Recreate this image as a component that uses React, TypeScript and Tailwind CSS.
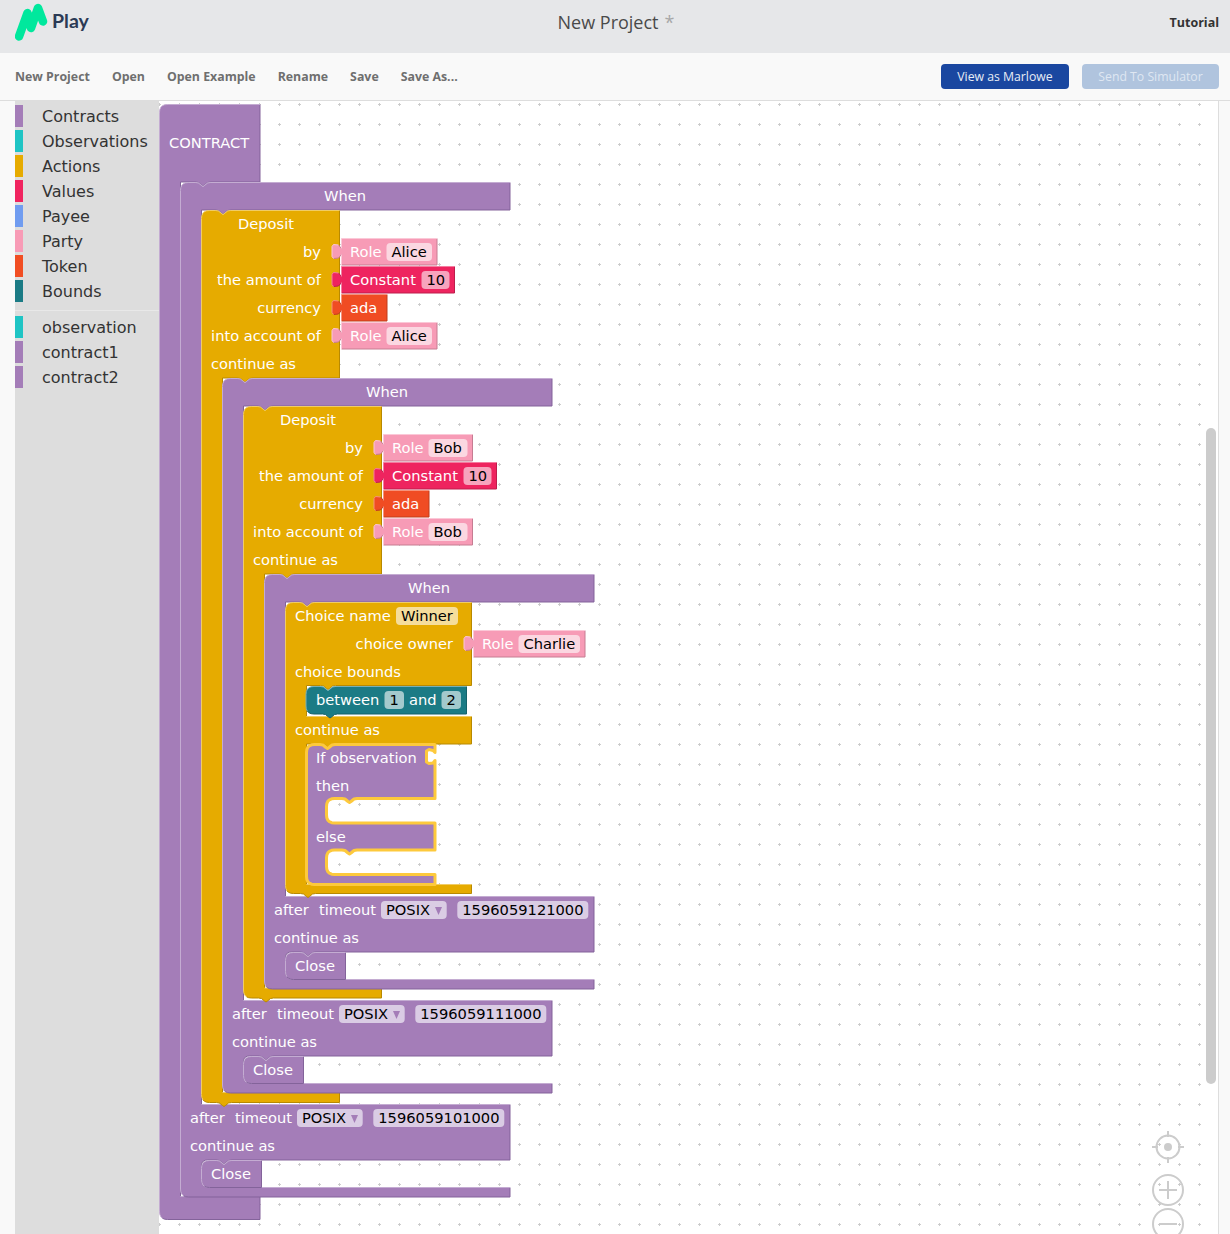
type P = [number, number, number?]
type Tone = { fill: string; light: string; dark: string }

const purple: Tone = { fill: "#a47db8", light: "#c4acd2", dark: "#83639a" }
const yellow: Tone = { fill: "#e6ab00", light: "#f0cc66", dark: "#b88900" }
const pink: Tone = { fill: "#f79bb6", light: "#fbc8d7", dark: "#c67c92" }
const red: Tone = { fill: "#ee245f", light: "#f57c9f", dark: "#be1d4c" }
const orange: Tone = { fill: "#f04c23", light: "#f6937b", dark: "#c03d1c" }
const teal: Tone = { fill: "#1b7b85", light: "#76b0b6", dark: "#15626a" }

const tools = [
  ["Contracts", "#a47db8"],
  ["Observations", "#1fc4c4"],
  ["Actions", "#e6ab00"],
  ["Values", "#f0245f"],
  ["Payee", "#709cf0"],
  ["Party", "#f89bb6"],
  ["Token", "#f14e23"],
  ["Bounds", "#1b7b85"],
]
const saved = [
  ["observation", "#1fc4c4"],
  ["contract1", "#a47db8"],
  ["contract2", "#a47db8"],
]
const actions = ["New Project", "Open", "Open Example", "Rename", "Save", "Save As..."]

// the connector dip between two stacked blocks, walked left to right
const dip: [number, number][] = [[0, 0], [3, 0.5], [6, 3], [7.5, 4], [9, 3], [12, 0.5], [15, 0]]
const notch = (x: number, y: number): P[] => dip.map(([a, b]) => [x + a, y + b] as P)
const bump = (x: number, y: number): P[] => notch(x, y).reverse()

function expand(pts: P[]) {
  const out: [number, number][] = []
  pts.forEach((p, i) => {
    const r = p[2]
    if (!r) {
      out.push([p[0], p[1]])
      return
    }
    const a = pts[(i - 1 + pts.length) % pts.length]
    const b = pts[(i + 1) % pts.length]
    const la = Math.hypot(a[0] - p[0], a[1] - p[1])
    const lb = Math.hypot(b[0] - p[0], b[1] - p[1])
    const q0 = [p[0] + ((a[0] - p[0]) / la) * r, p[1] + ((a[1] - p[1]) / la) * r]
    const q1 = [p[0] + ((b[0] - p[0]) / lb) * r, p[1] + ((b[1] - p[1]) / lb) * r]
    for (let t = 0; t <= 1.001; t += 0.2) {
      const u = 1 - t
      out.push([u * u * q0[0] + 2 * u * t * p[0] + t * t * q1[0], u * u * q0[1] + 2 * u * t * p[1] + t * t * q1[1]])
    }
  })
  return out
}

function Shape({ pts, tone }: { pts: P[]; tone: Tone }) {
  const line = expand(pts)
  let light = ""
  let dark = ""
  line.forEach((p, i) => {
    const n = line[(i + 1) % line.length]
    const seg = `M${p[0]} ${p[1]}L${n[0]} ${n[1]}`
    if (n[0] - p[0] - (n[1] - p[1]) > 0) light += seg
    else dark += seg
  })
  const d = "M" + line.map(p => p.join(" ")).join("L") + "Z"
  return (
    <g transform="translate(0.5 0.5)">
      <path d={d} fill={tone.fill} />
      <path d={dark} fill="none" stroke={tone.dark} />
      <path d={light} fill="none" stroke={tone.light} />
    </g>
  )
}

function T({ x, y, end, mid, dark, children }: { x: number; y: number; end?: boolean; mid?: boolean; dark?: boolean; children: string }) {
  return (
    <text x={x} y={y} textAnchor={end ? "end" : mid ? "middle" : "start"} fill={dark ? "#000" : "#fff"}>
      {children}
    </text>
  )
}

function Pill({ x, y, w, fill, text, mid }: { x: number; y: number; w: number; fill: string; text: string; mid?: boolean }) {
  return (
    <g>
      <rect x={x} y={y} width={w} height={18} rx={4} fill={fill} />
      <T x={mid ? x + w / 2 : x + 5} y={y + 14} mid={mid} dark>{text}</T>
    </g>
  )
}

const tab = (x: number, y: number): P[] => [
  [x, y + 16], [x - 3, y + 19.5], [x - 8, y + 20], [x - 9.5, y + 18],
  [x - 9.5, y + 8], [x - 8, y + 6], [x - 3, y + 6.5], [x, y + 10],
]

function Value({ x, y, right, tone, children }: { x: number; y: number; right: number; tone: Tone; children: React.ReactNode }) {
  return (
    <g>
      <Shape tone={tone} pts={[[x, y], [right - 1, y], [right - 1, y + 26.5], [x, y + 26.5], ...tab(x, y)]} />
      {children}
    </g>
  )
}

function Role({ x, y, name, w }: { x: number; y: number; name: string; w: number }) {
  return (
    <Value x={x} y={y} right={x + 45.5 + w + 5.5} tone={pink}>
      <T x={x + 9} y={y + 19}>Role</T>
      <Pill x={x + 45.5} y={y + 5} w={w} fill="#fbd7e1" text={name} />
    </Value>
  )
}

function Constant({ x, y }: { x: number; y: number }) {
  return (
    <Value x={x} y={y} right={x + 114} tone={red}>
      <T x={x + 9} y={y + 19}>Constant</T>
      <Pill x={x + 80.5} y={y + 5} w={28} fill="#f7a4bd" text="10" />
    </Value>
  )
}

function Ada({ x, y }: { x: number; y: number }) {
  return (
    <Value x={x} y={y} right={x + 46.5} tone={orange}>
      <T x={x + 9} y={y + 19}>ada</T>
    </Value>
  )
}

function Close({ x, y }: { x: number; y: number }) {
  return (
    <g>
      <Shape tone={purple} pts={[[x, y, 8], ...notch(x + 15, y), [x + 60, y], [x + 60, y + 27], [x, y + 27, 8]]} />
      <T x={x + 10} y={y + 19}>Close</T>
    </g>
  )
}

// a When block: header, the statement slot, the timeout row and its Close
function When({ x, y, after, bar, time, children }: { x: number; y: number; after: number; bar: number; time: string; children: React.ReactNode }) {
  const r = x + 329.5
  const c = x + 21
  return (
    <g>
      <Shape
        tone={purple}
        pts={[
          [x, y, 8], ...notch(x + 15, y), [r, y], [r, y + 27.5],
          ...bump(c + 14, y + 27.5), [c, y + 27.5], [c, after], [r, after], [r, after + 55.5],
          ...bump(c + 15, after + 55.5), [c, after + 55.5, 6], [c, bar, 8], [r, bar], [r, bar + 9.5], [x, bar + 9.5, 8],
        ]}
      />
      <T x={x + 165} y={y + 19} mid>When</T>
      {children}
      <T x={x + 10} y={after + 19}>after</T>
      <T x={x + 55} y={after + 19}>timeout</T>
      <Pill x={x + 117} y={after + 5} w={65.7} fill="#dacce4" text="POSIX" />
      <path d={`M${x + 171} ${after + 11}h7l-3.5 8z`} fill="#a47db8" />
      <Pill x={x + 193.3} y={after + 5} w={131} fill="#dacce4" text={time} />
      <T x={x + 10} y={after + 47}>continue as</T>
      <Close x={c} y={after + 56} />
    </g>
  )
}

function Deposit({ x, y, bottom, party, w, children }: { x: number; y: number; bottom: number; party: string; w: number; children: React.ReactNode }) {
  const r = x + 138
  const c = x + 21
  return (
    <g>
      <Shape
        tone={yellow}
        pts={[
          [x, y, 8], ...notch(x + 14, y), [r, y], [r, y + 167.5],
          ...bump(c + 15, y + 167.5), [c, y + 167.5], [c, bottom - 10], [r, bottom - 10], [r, bottom],
          ...bump(x + 15, bottom), [x, bottom, 8],
        ]}
      />
      <T x={x + 65} y={y + 19} mid>Deposit</T>
      <T x={x + 120} y={y + 47} end>by</T>
      <T x={x + 120} y={y + 75} end>the amount of</T>
      <T x={x + 120} y={y + 103} end>currency</T>
      <T x={x + 120} y={y + 131} end>into account of</T>
      <T x={x + 10} y={y + 159}>continue as</T>
      <Role x={x + 140} y={y + 28} name={party} w={w} />
      <Constant x={x + 140} y={y + 56} />
      <Ada x={x + 140} y={y + 84} />
      <Role x={x + 140} y={y + 112} name={party} w={w} />
      {children}
    </g>
  )
}

function Choice() {
  return (
    <g>
      <Shape
        tone={yellow}
        pts={[
          [285, 602, 8], ...notch(299, 602), [471, 602], [471, 685],
          ...bump(320, 685), [306, 685], [306, 716], [471, 716], [471, 743.5],
          ...bump(321, 743.5), [306, 743.5], [306, 884], [471, 884], [471, 893],
          ...bump(300, 893), [285, 893, 8],
        ]}
      />
      <T x={295} y={621}>Choice name</T>
      <Pill x={396} y={607} w={62} fill="#f5dd9b" text="Winner" />
      <T x={453} y={649} end>choice owner</T>
      <Role x={473} y={630} name="Charlie" w={61.5} />
      <T x={295} y={677}>choice bounds</T>
      <Shape
        tone={teal}
        pts={[[305.5, 686, 8], ...notch(320, 686), [466, 686], [466, 713.5], ...bump(322, 713.5), [305.5, 713.5, 8]]}
      />
      <T x={316} y={705}>between</T>
      <Pill x={384.5} y={691} w={19.5} fill="#a3c9cd" text="1" mid />
      <T x={409} y={705}>and</T>
      <Pill x={441.5} y={691} w={19.5} fill="#a3c9cd" text="2" mid />
      <T x={295} y={735}>continue as</T>
    </g>
  )
}

function IfBlock() {
  const pts: P[] = [
    [306.5, 744.5, 8], ...notch(320, 744.5), [435, 744.5], [435, 752.5],
    [433, 750.5], [429, 749.5], [426.5, 751], [426.5, 762], [429, 763.5], [433, 763], [435, 760.5],
    [435, 798.5], ...bump(342, 798.5), [326.5, 798.5, 8], [326.5, 823, 8], [435, 823], [435, 850],
    ...bump(342, 850), [326.5, 850, 8], [326.5, 874.5, 8], [435, 874.5], [435, 884.5], [306.5, 884.5, 8],
  ]
  return (
    <g>
      <path d={"M" + expand(pts).map(p => p.join(" ")).join("L") + "Z"} fill="#a47db8" stroke="#fdc93c" strokeWidth={3} strokeLinejoin="round" />
      <T x={316} y={763}>If observation</T>
      <T x={316} y={791}>then</T>
      <T x={316} y={842}>else</T>
    </g>
  )
}

function Workspace() {
  return (
    <svg viewBox="159 101 1059 1133" className="absolute inset-0 h-full w-full font-['DejaVu_Sans'] text-[14.67px]">
      <defs>
        <pattern id="grid" x={10} y={0} width={20} height={20} patternUnits="userSpaceOnUse">
          <path d="M8 4.5h3M9.5 3v3" stroke="#ccc" />
        </pattern>
      </defs>
      <rect x={159} y={101} width={1059} height={1133} fill="url(#grid)" />

      <Shape
        tone={purple}
        pts={[[159, 104, 8], [259.5, 104], [259.5, 181.5], ...bump(195, 181.5), [180, 181.5], [180, 1196], [259.5, 1196], [259.5, 1219], [159, 1219, 8]]}
      />
      <T x={169} y={148}>CONTRACT</T>

      <When x={180} y={182} after={1104} bar={1187} time="1596059101000">
        <Deposit x={201} y={210} bottom={1102} party="Alice" w={45.5}>
          <When x={222} y={378} after={1000} bar={1083} time="1596059111000">
            <Deposit x={243} y={406} bottom={997.5} party="Bob" w={39}>
              <When x={264} y={574} after={896} bar={979} time="1596059121000">
                <Choice />
                <IfBlock />
              </When>
            </Deposit>
          </When>
        </Deposit>
      </When>

      <rect x={1206} y={428} width={10} height={656} rx={5} fill="#ccc" />

      <g fill="none" stroke="#ccc" strokeWidth={2}>
        <circle cx={1168} cy={1147} r={11.5} />
        <path d="M1168 1131v6M1168 1157v6M1152 1147h6M1178 1147h6" />
        <circle cx={1168} cy={1190} r={15} />
        <path d="M1168 1181v18M1159 1190h18" />
        <circle cx={1168} cy={1224} r={15} />
        <path d="M1159 1224h18" />
      </g>
      <circle cx={1168} cy={1147} r={4} fill="#ccc" />
    </svg>
  )
}

function Swatch({ label, color }: { label: string; color: string }) {
  return (
    <div className="flex h-[25px] items-center">
      <svg width="8" height="22" className="mt-[1px] shrink-0 self-start">
        <rect width="8" height="22" fill={color} />
      </svg>
      <span className="ml-[19px] text-[16px] text-[#333]">{label}</span>
    </div>
  )
}

export default function App() {
  return (
    <div className="flex h-[1234px] w-[1230px] flex-col overflow-hidden bg-[#f9f9f9] font-['Open_Sans',sans-serif]">
      <header className="flex h-[53px] shrink-0 items-start bg-[#e6e7e9]">
        <div className="flex w-[300px] items-start pl-[15px] pt-[3px]">
          <svg width="33" height="38" viewBox="15 3 33 38">
            <path d="M19 36.5 L27.5 13 L31 28 L38 8 L43 21.5" fill="none" stroke="#00e89d" strokeWidth="8.5" strokeLinecap="round" strokeLinejoin="round" />
          </svg>
          <span className="ml-[4px] mt-[6px] font-['Lato',sans-serif] text-[19.5px] font-bold leading-[24px] text-[#2b3a55]">Play</span>
        </div>
        <div className="flex flex-1 justify-center pl-[2px] pt-[9px] text-[18px] leading-[27px] text-[#4a4a4a]">
          <span>New Project</span>
          <span className="ml-[6px] text-[#a8a8a8]">*</span>
        </div>
        <div className="w-[300px] pr-[11px] pt-[14px] text-right text-[12.5px] font-bold leading-[18px] text-[#333]">Tutorial</div>
      </header>

      <nav className="flex h-[48px] shrink-0 items-center border-b border-[#ddd] pl-[15px] pr-[11px]">
        <div className="flex gap-[22px] pt-[1px] text-[12.35px] font-bold text-[#6f6f6f]">
          {actions.map(a => (
            <span key={a}>{a}</span>
          ))}
        </div>
        <button className="ml-auto h-[25px] w-[128px] rounded-[4px] bg-[#1a47a0] pt-[1px] text-[12.25px] text-[#e8edf6]">View as Marlowe</button>
        <button className="ml-[13px] h-[25px] w-[137px] rounded-[4px] bg-[#b0c4de] pt-[1px] text-[12.25px] text-[#dfe7f2]">Send To Simulator</button>
      </nav>

      <div className="flex min-h-0 flex-1">
        <aside className="ml-[15px] w-[144px] shrink-0 bg-[#ddd] pt-[3px] font-['DejaVu_Sans',sans-serif]">
          {tools.map(([label, color]) => (
            <Swatch key={label} label={label} color={color} />
          ))}
          <div className="mb-[4px] mt-[6px] border-t border-[#e8e8e8]" />
          {saved.map(([label, color]) => (
            <Swatch key={label} label={label} color={color} />
          ))}
        </aside>
        <main className="relative w-[1059px] shrink-0 bg-white">
          <Workspace />
        </main>
        <div className="flex-1 border-l border-[#ddd]" />
      </div>
    </div>
  )
}
